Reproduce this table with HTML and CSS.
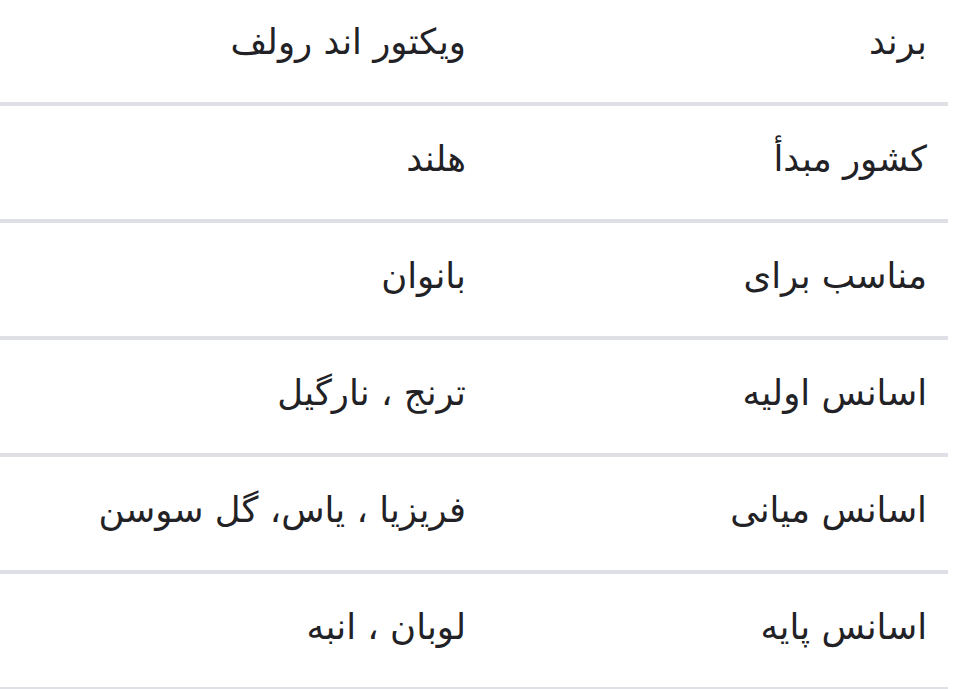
FILE: index.html
```html
<!DOCTYPE html>
<html lang="fa" dir="rtl">
<head>
<meta charset="utf-8">
<link rel="stylesheet" href="styles.css">
</head>
<body>
<div class="specs">
  <div class="row first"><div class="label">برند</div><div class="value">ویکتور اند رولف</div></div>
  <div class="row"><div class="label">کشور مبدأ</div><div class="value">هلند</div></div>
  <div class="row"><div class="label">مناسب برای</div><div class="value">بانوان</div></div>
  <div class="row"><div class="label">اسانس اولیه</div><div class="value">ترنج ، نارگیل</div></div>
  <div class="row"><div class="label">اسانس میانی</div><div class="value">فریزیا ، یاس، گل سوسن</div></div>
  <div class="row"><div class="label">اسانس پایه</div><div class="value">لوبان ، انبه</div></div>
</div>
</body>
</html>
```
FILE: styles.css
```css
html, body {
  margin: 0;
  padding: 0;
  background: #fff;
}
body {
  font-family: "DejaVu Sans", sans-serif;
  color: #222226;
  overflow: hidden;
}
.specs {
  width: 948px;
  margin-right: 12px;
}
.row {
  display: grid;
  grid-template-columns: 461px 1fr;
  align-items: center;
  height: 113px;
  border-bottom: 4px solid #dfe0e6;
  font-size: 35.5px;
  line-height: 1.2;
}
.label, .value {
  padding-right: 21px;
  padding-bottom: 7px;
}
.row.first {
  height: 102px;
}
.row.first .label, .row.first .value {
  padding-bottom: 18px;
}
```
